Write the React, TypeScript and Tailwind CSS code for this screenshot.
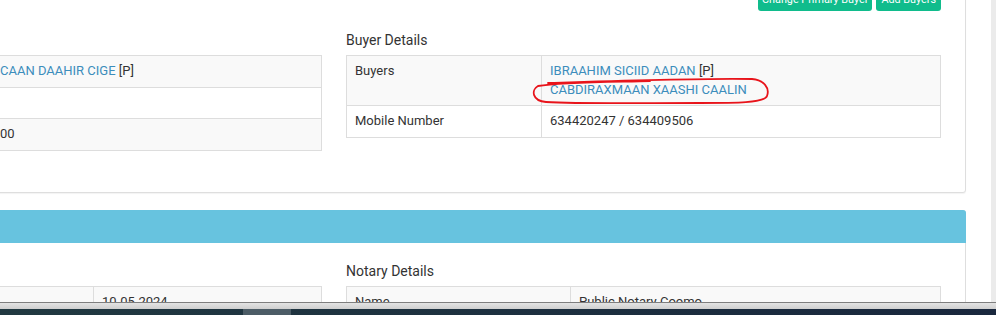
import React from "react";

type Row = { label: string; value: React.ReactNode };

const cell = "border border-[#dddddd] px-[8px] pt-[6px] pb-[6px] align-top";

const DetailTable = ({ rows, labelWidth }: { rows: Row[]; labelWidth: string }) => (
  <table className="w-full border-collapse text-[13px] leading-[18.5px] text-[#333]">
    <tbody>
      {rows.map((row, i) => (
        <tr key={i} className={i % 2 === 0 ? "bg-[#f9f9f9]" : "bg-white"}>
          <td className={`${cell} ${labelWidth}`}>{row.label}</td>
          <td className={cell}>{row.value}</td>
        </tr>
      ))}
    </tbody>
  </table>
);

const Link = ({ children }: { children: React.ReactNode }) => (
  <span className="text-[#3c8dbc]">{children}</span>
);

export default function App() {
  return (
    <div className="relative h-[315px] w-[996px] overflow-hidden bg-white font-['Roboto',sans-serif]">
      <div className="flex h-full">
        <div className="w-[991px] shrink-0 pr-[25px]">
          {/* Sale details card */}
          <div className="-mt-[20px] -ml-[300px] rounded-[3px] border border-[#dedede] bg-white shadow-[0_1px_1px_rgba(0,0,0,0.05)]">
            <div className="pt-[6px] pr-[24px] pb-[41px]">
              <div className="flex justify-end gap-[4px]">
                <button className="h-[24px] rounded-[3px] bg-[#10bc8c] px-[4px] text-[10.8px] leading-[15px] text-white">
                  Change Primary Buyer
                </button>
                <button className="h-[24px] rounded-[3px] bg-[#10bc8c] px-[5px] text-[10.8px] leading-[15px] text-white">
                  Add Buyers
                </button>
              </div>

              <div className="mt-[19px] flex justify-end gap-[24px]">
                <div className="w-[595px]">
                  <h4 className="mb-[5px] text-[14px] leading-[20px] text-[#333]">Seller Details</h4>
                  <DetailTable
                    labelWidth="w-[264px]"
                    rows={[
                      {
                        label: "Sellers",
                        value: (
                          <>
                            <Link>CAAN DAAHIR CIGE</Link> [P]
                          </>
                        ),
                      },
                      { label: "Mobile Number", value: "" },
                      { label: "Amount", value: "00" },
                    ]}
                  />
                </div>

                <div className="w-[595px]">
                  <h4 className="mb-[5px] text-[14px] leading-[20px] text-[#333]">Buyer Details</h4>
                  <DetailTable
                    labelWidth="w-[195px]"
                    rows={[
                      {
                        label: "Buyers",
                        value: (
                          <>
                            <Link>IBRAAHIM SICIID AADAN</Link> [P]
                            <br />
                            <Link>CABDIRAXMAAN XAASHI CAALIN</Link>
                          </>
                        ),
                      },
                      { label: "Mobile Number", value: "634420247 / 634409506" },
                    ]}
                  />
                </div>
              </div>
            </div>
          </div>

          {/* Notary card */}
          <div className="mt-[17px] -ml-[300px] rounded-[3px] border border-[#dedede] bg-white">
            <div className="-mx-px -mt-px h-[33px] rounded-t-[3px] bg-[#67c3df]" />
            <div className="flex justify-end gap-[24px] pr-[24px]">
              <div className="w-[595px]">
                <h4 className="mt-[18px] mb-[5px] text-[14px] leading-[20px] text-[#333]">Contract Details</h4>
                <DetailTable
                  labelWidth="w-[366px]"
                  rows={[
                    { label: "Date", value: "10-05-2024" },
                    { label: "Reference", value: "" },
                  ]}
                />
              </div>
              <div className="w-[595px]">
                <h4 className="mt-[18px] mb-[5px] text-[14px] leading-[20px] text-[#333]">Notary Details</h4>
                <DetailTable
                  labelWidth="w-[224px]"
                  rows={[
                    { label: "Name", value: "Public Notary Coomo" },
                    { label: "Address", value: "" },
                  ]}
                />
              </div>
            </div>
          </div>
        </div>
        <div className="flex-1 bg-[#ebebeb]" />
      </div>

      {/* red hand-drawn mark */}
      <svg className="pointer-events-none absolute top-0 left-0" width="996" height="315">
        <path
          d="M 548 83 C 610 81, 700 78, 752 79 C 764 80, 770 88, 767 96 C 765 103, 735 103, 700 103 C 640 103, 580 104, 546 102 C 532 101, 531 90, 538 86 C 560 82, 610 82, 650 81"
          fill="none"
          stroke="#e8141b"
          strokeWidth="1.8"
          strokeLinecap="round"
        />
      </svg>

      {/* taskbar over the page */}
      <div className="absolute right-0 bottom-0 left-0 flex h-[13px] flex-col">
        <div className="h-px bg-[#7e7e7e]" />
        <div className="h-[6px] bg-gradient-to-b from-[#e4e4e4] to-[#cfcfcf]" />
        <div className="flex h-[6px] bg-gradient-to-r from-[#213941] to-[#19273d]">
          <div className="ml-[243px] w-[48px] bg-[#4c5c66]" />
        </div>
      </div>
    </div>
  );
}
